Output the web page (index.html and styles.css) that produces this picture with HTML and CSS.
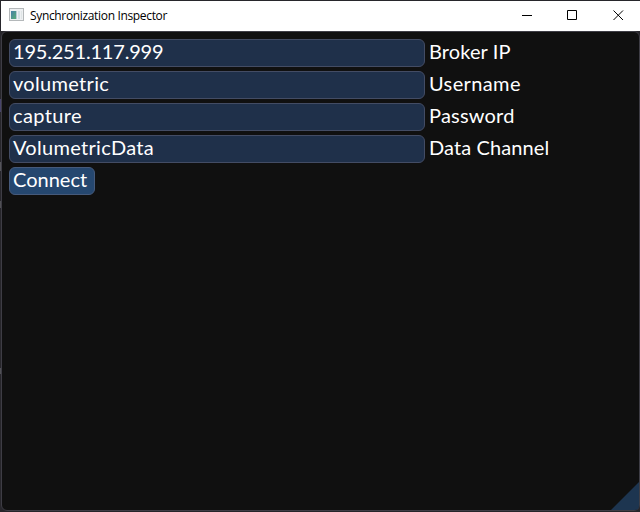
FILE: index.html
```html
<!DOCTYPE html>
<html lang="en">
<head>
<meta charset="utf-8">
<title>Synchronization Inspector</title>
<link rel="stylesheet" href="styles.css">
</head>
<body>
<div class="window">
  <header class="titlebar">
    <svg class="app-icon" width="16" height="14" viewBox="0 0 16 14" shape-rendering="crispEdges">
      <defs><linearGradient id="pane" x1="0" y1="0" x2="1" y2="1"><stop offset="0" stop-color="#477fa9"/><stop offset="1" stop-color="#58ad77"/></linearGradient></defs>
      <path fill="#b4b8ba" d="M0 0h15v13H0z"/>
      <path fill="#eef0f2" d="M1 1h13v11H1z"/>
      <path fill="url(#pane)" d="M2 3h5v8H2z"/>
      <path fill="#b5cad5" d="M7 3h1v8H7z"/>
      <path fill="#d4dfe5" d="M9 3h2v8H9z"/>
      <path fill="#dfe5e6" d="M12 3h1v8h-1z"/>
    </svg>
    <h1 class="title"><span class="t-title">Synchronization Inspector</span></h1>
    <div class="controls">
      <svg class="control" width="46" height="28" viewBox="0 0 46 28"><path d="M18 13.500h10"/></svg>
      <svg class="control" width="46" height="28" viewBox="0 0 46 28"><path d="M17.500 8.500h9v9h-9z"/></svg>
      <svg class="control" width="46" height="28" viewBox="0 0 46 28"><path d="M17.500 8.500l9.500 9.500M27 8.500l-9.500 9.500"/></svg>
    </div>
  </header>
  <main class="panel">
    <div class="row"><div class="field"><span class="t-ip">195.251.117.999</span></div><span class="label t-broker">Broker IP</span></div>
    <div class="row"><div class="field"><span class="t-vol">volumetric</span></div><span class="label t-user">Username</span></div>
    <div class="row"><div class="field"><span class="t-cap">capture</span></div><span class="label t-pass">Password</span></div>
    <div class="row"><div class="field"><span class="t-data">VolumetricData</span></div><span class="label t-chan">Data Channel</span></div>
    <button class="connect" type="button"><span class="t-conn">Connect</span></button>
    <svg class="grip" width="28" height="28" viewBox="0 0 28 28"><path fill="#1d3550" d="M28 0v24q0 4-4 4H0z"/></svg>
  </main>
</div>
</body>
</html>
```
FILE: styles.css
```css
* { box-sizing: border-box; }
body { margin: 0; background: #27262b; overflow: hidden; }
.window {
  width: 640px;
  height: 512px;
  padding: 1px 0 1px 1px;
  display: flex;
  flex-direction: column;
  background: linear-gradient(#27262b 99px, #48446b 99px 112px, #27262b 112px 162px, #55555a 162px 171px, #27262b 171px 201px, #505055 201px 208px, #27262b 208px 368px, #505055 368px 374px, #27262b 374px);
}
.titlebar {
  height: 30px;
  flex: none;
  display: flex;
  align-items: center;
  background: #fff;
  padding-left: 8px;
}
.app-icon { margin: 0 5px 2px 0; }
.title {
  margin: 0;
  flex: 1;
  font: 400 12px/16px "Open Sans", sans-serif;
  color: #000;
  white-space: nowrap;
}
.t-title { letter-spacing: -0.34px; }
.controls { display: flex; margin-right: -2px; }
.control { fill: none; stroke: #000; stroke-width: 1; }
.panel {
  position: relative;
  flex: 1;
  display: flex;
  flex-direction: column;
  gap: 4px;
  padding: 7px;
  background: #101010;
  border: 1px solid #3e3d45;
  border-radius: 6px;
  font: 400 20px/23px Lato, sans-serif;
  color: #fff;
}
.row { display: flex; height: 28px; gap: 4px; align-items: flex-start; }
.field {
  width: 416px;
  height: 28px;
  padding: 0 3px;
  background: #1f304a;
  border: 1px solid #434c64;
  border-radius: 6px;
  white-space: nowrap;
}
.label { white-space: nowrap; line-height: 25px; }
.connect {
  width: 86px;
  height: 28px;
  padding: 0 3px 3px;
  background: #25476f;
  border: 1px solid #465a7b;
  border-radius: 6px;
  color: inherit;
  font: inherit;
  text-align: left;
}
.t-ip { letter-spacing: -0.2px; }
.t-vol { letter-spacing: 0.32px; }
.t-cap { letter-spacing: 0.38px; }
.t-data { letter-spacing: 0.3px; }
.t-broker { letter-spacing: 0.1px; }
.t-user { letter-spacing: 0.38px; }
.t-pass { letter-spacing: 0.2px; }
.t-chan { letter-spacing: 0.1px; }
.grip { position: absolute; right: 0; bottom: 0; }
```
